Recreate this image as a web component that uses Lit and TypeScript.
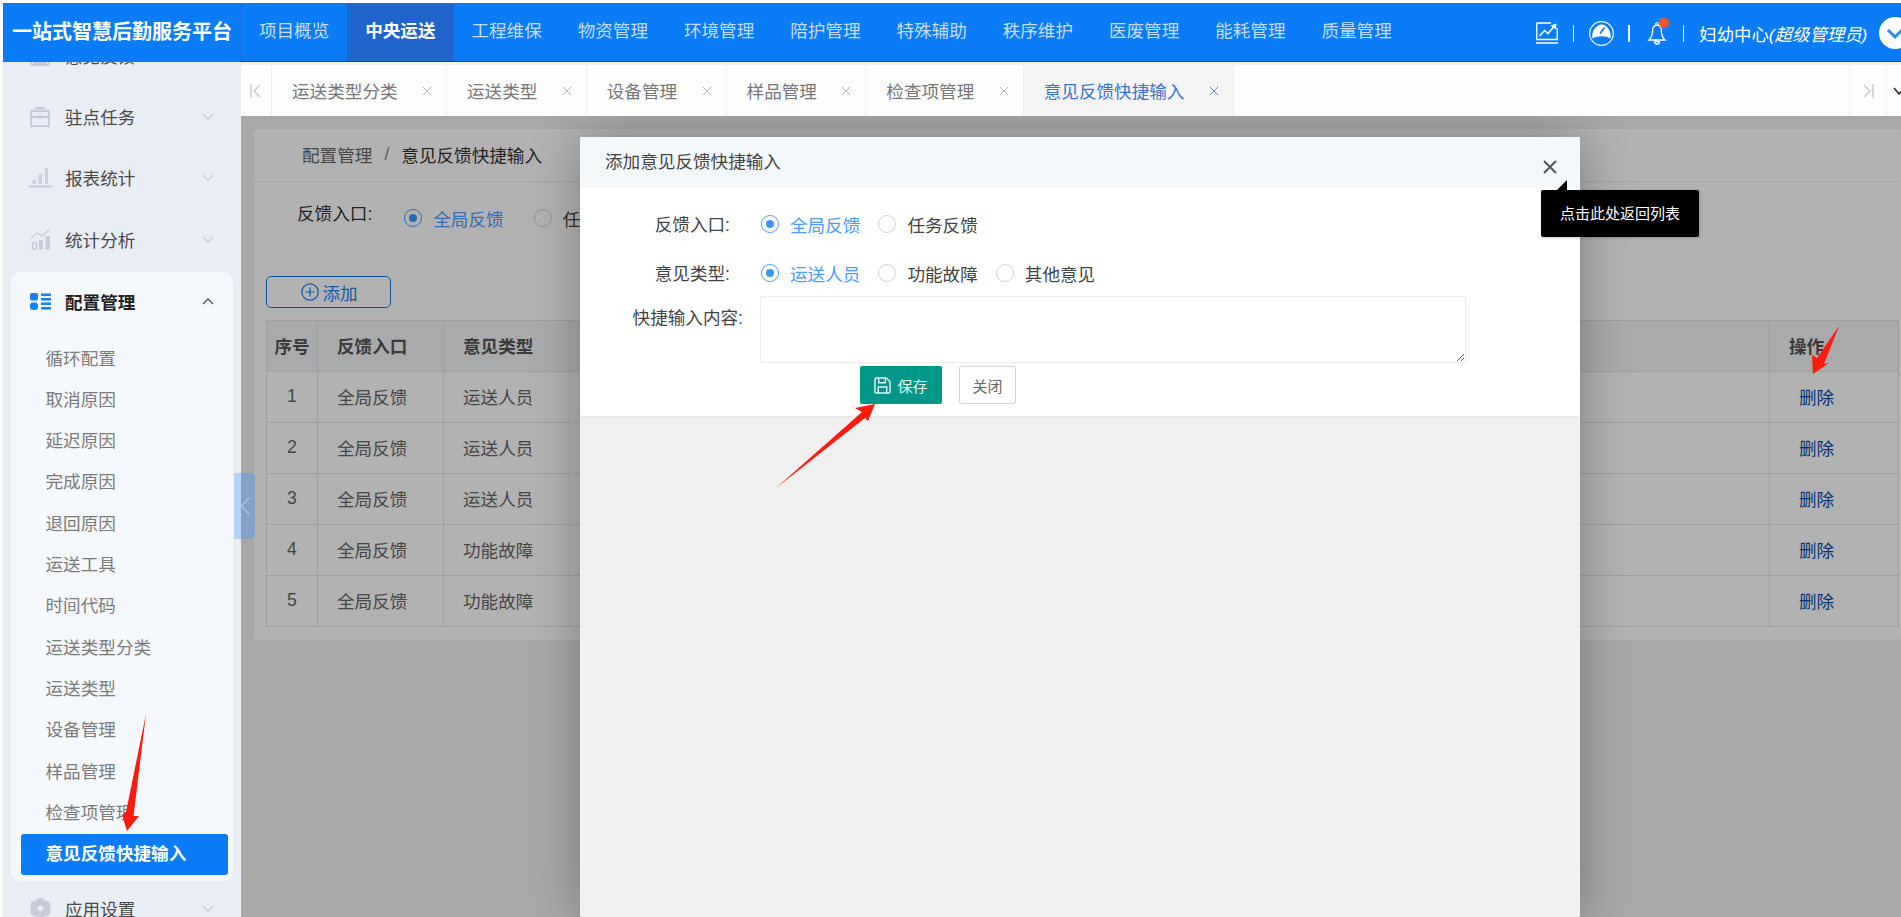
import { LitElement, html, css, svg } from "lit";
import { customElement } from "lit/decorators.js";

const NAV = ["项目概览", "中央运送", "工程维保", "物资管理", "环境管理", "陪护管理", "特殊辅助", "秩序维护", "医废管理", "能耗管理", "质量管理"];
const TABS = ["运送类型分类", "运送类型", "设备管理", "样品管理", "检查项管理", "意见反馈快捷输入"];
const SUB = ["循环配置", "取消原因", "延迟原因", "完成原因", "退回原因", "运送工具", "时间代码", "运送类型分类", "运送类型", "设备管理", "样品管理", "检查项管理", "意见反馈快捷输入"];
const ROWS = [
  ["1", "全局反馈", "运送人员"],
  ["2", "全局反馈", "运送人员"],
  ["3", "全局反馈", "运送人员"],
  ["4", "全局反馈", "功能故障"],
  ["5", "全局反馈", "功能故障"],
];

const chevron = (up = false) => html`<svg class="chev" viewBox="0 0 12 7" width="12" height="7">
  <path d=${up ? "M1 6l5-5 5 5" : "M1 1l5 5 5-5"} fill="none" stroke="currentColor" stroke-width="1.3" />
</svg>`;

const ICONS = {
  report: svg`<rect x="1" y="14" width="18" height="6" rx="1" fill="none" stroke="currentColor" stroke-width="2" /><rect x="3" y="16" width="14" height="4" fill="currentColor" />`,
  task: svg`<path d="M6.5 5V2h7V5M1 5h18v15H1zM1 11h18" fill="none" stroke="currentColor" stroke-width="1.8" /><rect x="8" y="9.5" width="4" height="3" fill="currentColor" />`,
  bars: svg`<path d="M0 19.5h23" stroke="currentColor" stroke-width="2.200" /><path d="M3.500 17v-4h3.500v4zM9.500 17V7h3.500v10zM16 17V1h3v16z" fill="currentColor" opacity=".85" />`,
  stats: svg`<path d="M1 9l6-5 5 3 7-6" fill="none" stroke="currentColor" stroke-width="1.300" /><path d="M2.500 14h4v6h-4z" fill="none" stroke="currentColor" stroke-width="1.300" /><path d="M9 11h4v9.500H9zM15.500 7h4.500v13.500h-4.500z" fill="currentColor" />`,
  config: svg`<rect x="0" y="0" width="8" height="7.500" rx="2" fill="#1280f7" /><rect x="0" y="9.500" width="8" height="7.500" rx="3" fill="#1280f7" /><path d="M11 .5h10v2.500H11zM11 5h10v2.500H11zM11 9.500h10v2.500H11zM11 14h10v2.500H11z" fill="#1280f7" />`,
  gear: svg`<g fill="currentColor"><circle cx="10.500" cy="4.500" r="4.500" /><circle cx="16" cy="7.500" r="4.500" /><circle cx="16" cy="13.500" r="4.500" /><circle cx="10.500" cy="16.500" r="4.500" /><circle cx="5" cy="13.500" r="4.500" /><circle cx="5" cy="7.500" r="4.500" /><circle cx="10.500" cy="10.500" r="6" /></g><circle cx="10.500" cy="10.500" r="2.800" fill="#e9edf5" />`,
};

const sideIcon = (name: keyof typeof ICONS, w = 21, h = 21) =>
  html`<svg class="side-icon" viewBox="0 0 ${w} ${h}" width=${w} height=${h}>${ICONS[name]}</svg>`;

const radio = (label: string, on = false) => html`
  <span class="radio ${on ? "on" : ""}"><i></i>${label}</span>
`;

@customElement("app-root")
export class AppRoot extends LitElement {
  static styles = css`
    :host {
      display: block;
      position: relative;
      width: 1901px;
      height: 917px;
      box-sizing: border-box;
      padding: 3px 0 0 3px;
      overflow: hidden;
      background: #fff;
      font-family: "Liberation Sans", "Noto Sans CJK SC", sans-serif;
      font-size: 17.6px;
      color: #444;
    }
    .topbar {
      display: flex;
      height: 59px;
      background: #0a7cf8;
      position: relative;
      z-index: 2;
    }
    .logo {
      width: 238px;
      flex-shrink: 0;
      text-align: center;
      line-height: 58px;
      font-size: 20px;
      font-weight: 700;
      color: #fff;
      white-space: nowrap;
    }
    .bar {
      flex: 1;
      min-width: 0;
      display: flex;
      align-items: center;
      height: 58px;
      border-bottom: 1px solid #39424e;
      border-left: 1px solid #1a6fd6;
      margin-left: -1px;
      white-space: nowrap;
    }
    .nav-item {
      width: 106.250px;
      flex-shrink: 0;
      height: 57px;
      line-height: 55px;
      text-align: center;
      color: #c4dcfb;
    }
    .nav-item.active {
      background: #2165cc;
      color: #fff;
      font-weight: 700;
    }
    .tools {
      display: flex;
      align-items: center;
      margin-left: 126px;
      color: #fff;
      flex-shrink: 0;
      padding-top: 2px;
    }
    .tools svg {
      display: block;
      flex-shrink: 0;
    }
    .sep {
      width: 1.500px;
      height: 17px;
      background: #e8f2ff;
      flex-shrink: 0;
    }
    .user {
      margin-left: 15px;
      font-size: 17.4px;
    }
    .user em {
      font-style: italic;
    }
    .avatar {
      width: 32px;
      height: 32px;
      margin-left: 12px;
      border-radius: 50%;
      background: #fff;
      flex-shrink: 0;
      color: #2a8bf4;
    }
    .main {
      display: flex;
      height: 855px;
    }
    .side {
      width: 238px;
      flex-shrink: 0;
      overflow: hidden;
      background: #e9edf5;
    }
    .side-list {
      margin-top: -36px;
    }
    .side-item {
      display: flex;
      align-items: center;
      height: 61.400px;
      padding: 0 27px 3px 26px;
      color: #4a4a4a;
      box-sizing: border-box;
    }
    .side-item.short {
      height: 54px;
      padding-bottom: 0;
    }
    .side-icon {
      flex-shrink: 0;
      color: #c7ccd8;
      width: 23px;
      margin-right: 13px;
    }
    .side-item .chev {
      margin-left: auto;
      color: #c9cdd6;
    }
    .group {
      margin-left: 8px;
      width: 222px;
      padding: 0 5px 6px 10px;
      box-sizing: border-box;
      background: #f5f8fc;
      border-radius: 9px;
    }
    .group .side-item {
      margin-left: -10px;
      margin-right: -5px;
      padding: 0 19px 8px 18px;
      height: 67px;
      color: #222;
      font-weight: 700;
    }
    .group .side-item .chev {
      color: #555;
    }
    .sub {
      height: 41.300px;
      line-height: 41.300px;
      padding-left: 24.500px;
      color: #7b7b7b;
      border-radius: 3px;
    }
    .sub.active {
      background: #0a7cf8;
      color: #fff;
      font-weight: 700;
      height: 41px;
    }
    .collapse {
      position: absolute;
      left: 234px;
      top: 473px;
      width: 21px;
      height: 66px;
      border-radius: 0 5px 5px 0;
      background: linear-gradient(90deg, #b4d2f6 7px, #84a2c8 7px);
      color: #a9c6ea;
      display: flex;
      align-items: center;
      justify-content: center;
      z-index: 3;
    }
    .right {
      flex: 1;
      min-width: 0;
      display: flex;
      flex-direction: column;
    }
    .tabs {
      display: flex;
      height: 54px;
      box-sizing: border-box;
      border-top: 3px solid #f2f2f2;
      background: #fdfdfd;
      color: #777;
      flex-shrink: 0;
      white-space: nowrap;
    }
    .tab-ctl {
      width: 31px;
      flex-shrink: 0;
      display: flex;
      align-items: center;
      justify-content: center;
      border-right: 1px solid #f0f0f0;
      box-sizing: border-box;
      color: #ccc;
    }
    .tab-ctl.end {
      width: 37px;
      margin-left: auto;
      border-right: 0;
      border-left: 1px solid #f0f0f0;
    }
    .tab-ctl.menu {
      width: 15px;
      border-right: 0;
      border-left: 1px solid #f0f0f0;
      justify-content: flex-start;
      padding-left: 6px;
      color: #222;
      overflow: hidden;
    }
    .tab-ctl.menu svg {
      flex-shrink: 0;
    }
    .tab {
      display: flex;
      align-items: center;
      padding: 0 13px 0 20px;
      border-right: 1px solid #f0f0f0;
      box-sizing: border-box;
      flex-shrink: 0;
    }
    .tab svg {
      margin-left: 23.400px;
      color: #b5b5b5;
    }
    .tab.active {
      background: #f5f5f5;
      color: #3a72cc;
    }
    .tab.active svg {
      color: #5f86d0;
    }
    .page {
      flex: 1;
      position: relative;
      background: #f1f1f1;
      padding: 13px 0 0 13px;
      min-height: 0;
      overflow: hidden;
    }
    .card {
      height: 511px;
      box-sizing: border-box;
      background: #fff;
      border-radius: 4px;
      padding-right: 2px;
    }
    .crumb {
      height: 53px;
      box-sizing: border-box;
      border-bottom: 1px solid #eee;
      padding-left: 48px;
      display: flex;
      align-items: center;
      color: #666;
      padding-bottom: 2px;
    }
    .crumb span {
      margin: 0 12px;
      color: #888;
    }
    .crumb b {
      font-weight: 400;
      color: #333;
    }
    .filter {
      display: flex;
      height: 94px;
      padding-left: 43px;
      box-sizing: border-box;
    }
    .filter label {
      margin-top: 19px;
      line-height: 26px;
      height: 26px;
      margin-right: 32px;
      color: #333;
    }
    .filter .radios {
      margin-top: 23px;
      height: 26px;
      display: flex;
    }
    .filter .radio {
      margin-right: 30px;
    }
    .radio {
      display: inline-flex;
      align-items: center;
      height: 26px;
      margin-right: 18px;
      color: #444;
      white-space: nowrap;
    }
    .radio i {
      width: 18px;
      height: 18px;
      box-sizing: border-box;
      border: 1px solid #d4d4d4;
      border-radius: 50%;
      margin-right: 11px;
      flex-shrink: 0;
      position: relative;
    }
    .radio.on {
      color: #4a9dff;
    }
    .radio.on i {
      border-color: #4a9dff;
    }
    .radio.on i::after {
      content: "";
      position: absolute;
      inset: 4px;
      border-radius: 50%;
      background: #3d96ff;
    }
    .add {
      margin-left: 12px;
      width: 125px;
      height: 32px;
      box-sizing: border-box;
      border: 1px solid #0a7cf8;
      border-radius: 5px;
      display: flex;
      align-items: center;
      justify-content: center;
      gap: 3px;
      padding-left: 2px;
      color: #1e82f0;
    }
    table {
      margin: 12px 0 0 12px;
      width: 1633px;
      table-layout: fixed;
      border-collapse: collapse;
    }
    th,
    td {
      height: 51px;
      padding: 0 0 1px 19px;
      box-sizing: border-box;
      border: 1px solid #e6e6e6;
      text-align: left;
      color: #666;
      font-weight: 400;
    }
    tr {
      height: 51px;
    }
    th {
      background: #f2f4f7;
      color: #555;
      font-weight: 700;
    }
    th.num,
    td.num {
      padding: 0 0 1px;
      text-align: center;
    }
    td.del {
      padding-left: 29px;
      color: #0a4fa8;
    }
    .shade {
      position: absolute;
      inset: 0;
      background: rgba(0, 0, 0, 0.3);
    }
    .modal {
      position: absolute;
      left: 339px;
      top: 21px;
      width: 1000px;
      height: 780px;
      background: #f0f0f0;
      border-radius: 2px;
      box-shadow: 1px 1px 50px rgba(0, 0, 0, 0.3);
    }
    .modal-head {
      height: 51px;
      line-height: 50px;
      padding-left: 25px;
      background: #f5f8fb;
      border-radius: 2px 2px 0 0;
      color: #444;
    }
    .x {
      position: absolute;
      left: 963px;
      top: 23px;
      color: #555;
    }
    .tip {
      position: absolute;
      left: 961px;
      top: 53px;
      width: 158px;
      height: 47px;
      line-height: 47px;
      text-align: center;
      font-size: 15px;
      background: #000;
      color: #fff;
      border-radius: 2px;
      box-shadow: 1px 1px 3px rgba(0, 0, 0, 0.2);
      z-index: 2;
    }
    .tip::before {
      content: "";
      position: absolute;
      left: 16px;
      top: -10px;
      width: 10px;
      height: 10px;
      background: #000;
      clip-path: polygon(100% 0, 100% 100%, 0 100%);
    }
    .modal-body {
      background: #fff;
      padding: 14px 0 12px;
      height: 228px;
      box-sizing: border-box;
      border-radius: 0 0 2px 2px;
      box-shadow: 0 1px 2px rgba(0, 0, 0, 0.05);
    }
    .form-row {
      display: grid;
      grid-template-columns: 180px 1fr;
      height: 44px;
      align-items: center;
    }
    .form-row.first {
      margin-bottom: 5px;
    }
    .form-row label {
      text-align: right;
      padding-right: 30px;
      margin-top: -2px;
      color: #444;
    }
    .form-row.text {
      height: 67px;
      margin-top: 1px;
      align-items: start;
    }
    .form-row.text label {
      padding-right: 17px;
      margin-top: 0;
      line-height: 44px;
    }
    .radios {
      display: flex;
    }
    .form-row .radios {
      margin-left: 1px;
    }
    textarea {
      display: block;
      width: 706px;
      height: 67px;
      box-sizing: border-box;
      border: 1px solid #ececec;
      border-radius: 2px;
      outline: none;
      background: #fff;
      margin: 0;
    }
    .actions {
      display: flex;
      gap: 17px;
      margin: 3px 0 0 280px;
    }
    .btn {
      height: 38px;
      box-sizing: border-box;
      border-radius: 2px;
      display: flex;
      align-items: center;
      justify-content: center;
      font-size: 15px;
    }
    .btn.save {
      width: 82px;
      background: #009688;
      color: #e6f5f3;
      gap: 6px;
    }
    .btn.close {
      width: 57px;
      border: 1px solid #d4d4d4;
      color: #666;
      background: #fff;
    }
    .arrows {
      position: absolute;
      left: 0;
      top: 0;
      pointer-events: none;
      z-index: 5;
    }
  `;

  private renderTop() {
    return html`
      <header class="topbar">
        <div class="logo">一站式智慧后勤服务平台</div>
        <div class="bar">
          ${NAV.map((n, i) => html`<div class="nav-item ${i === 1 ? "active" : ""}">${n}</div>`)}
          <div class="tools">
            <svg viewBox="0 0 22 22" width="22" height="22" fill="none" stroke="currentColor">
              <path d="M15 1H1.500a.7.7 0 0 0-.7.7V17.500h20.400V6" stroke-width="1.300" />
              <path d="M3.500 14l5-5.500 3.500 3 6-7" stroke-width="1.600" />
              <path d="M14.500 3.500L20.500 1.500 20 7.500z" fill="currentColor" stroke="none" />
              <path d="M0 21h22" stroke-width="1.500" />
            </svg>
            <span class="sep" style="margin-left:15px"></span>
            <svg style="margin-left:15px" viewBox="0 0 25 25" width="25" height="25">
              <circle cx="12.500" cy="12.500" r="11.800" fill="none" stroke="currentColor" stroke-width="1.200" />
              <path d="M3.500 17.500C2 10 7.500 3.500 12.500 3.500S23 10 21.500 17.500C17 14.500 8 14.500 3.500 17.500z" fill="currentColor" />
              <path d="M11 12.500L15.500 6.500" stroke="#0a7cf8" stroke-width="1.700" />
            </svg>
            <span class="sep" style="margin-left:14px"></span>
            <svg style="margin-left:18px;overflow:visible" viewBox="0 0 18 23" width="18" height="23">
              <path d="M9 3.200C5.500 3.200 4.500 6.500 4.500 10c0 3.800-1.500 6-3.500 8h16c-2-2-3.500-4.200-3.500-8 0-3.500-1-6.800-4.500-6.800z" fill="none" stroke="currentColor" stroke-width="1.300" />
              <circle cx="9" cy="2" r="1.400" fill="none" stroke="currentColor" />
              <path d="M6.500 19.500a2.500 2.500 0 0 0 5 0z" fill="none" stroke="currentColor" stroke-width="1.300" />
              <circle cx="16" cy="1" r="5" fill="#ff5522" />
            </svg>
            <span class="sep" style="margin-left:17px"></span>
            <span class="user">妇幼中心<em>(超级管理员)</em></span>
            <svg class="avatar" viewBox="0 0 32 32"><path d="M9 13l7 7 7-7" fill="none" stroke="currentColor" stroke-width="3" /></svg>
          </div>
        </div>
      </header>
    `;
  }

  private renderSide() {
    return html`
      <aside class="side">
        <div class="side-list">
          <div class="side-item">${sideIcon("report")}意见反馈${chevron()}</div>
          <div class="side-item">${sideIcon("task")}驻点任务${chevron()}</div>
          <div class="side-item">${sideIcon("bars", 23)}报表统计${chevron()}</div>
          <div class="side-item">${sideIcon("stats")}统计分析${chevron()}</div>
          <div class="group">
            <div class="side-item">${sideIcon("config", 21, 17)}配置管理${chevron(true)}</div>
            ${SUB.map((s, i) => html`<div class="sub ${i === SUB.length - 1 ? "active" : ""}">${s}</div>`)}
          </div>
          <div class="side-item short">${sideIcon("gear")}<span style="font-weight:400">应用设置</span>${chevron()}</div>
        </div>
      </aside>
    `;
  }

  private renderTabs() {
    const x = html`<svg viewBox="0 0 12 12" width="12" height="12"><path d="M2 2l8 8M10 2l-8 8" stroke="currentColor" stroke-width="1" /></svg>`;
    return html`
      <nav class="tabs">
        <div class="tab-ctl">
          <svg viewBox="0 0 12 14" width="12" height="14" fill="none" stroke="currentColor" stroke-width="1.500">
            <path d="M1 0v14M10 1L4 7l6 6" />
          </svg>
        </div>
        ${TABS.map((t, i) => html`<div class="tab ${i === TABS.length - 1 ? "active" : ""}">${t}${x}</div>`)}
        <div class="tab-ctl end">
          <svg viewBox="0 0 12 14" width="12" height="14" fill="none" stroke="currentColor" stroke-width="1.500">
            <path d="M11 0v14M2 1l6 6-6 6" />
          </svg>
        </div>
        <div class="tab-ctl menu">
          <svg viewBox="0 0 12 8" width="12" height="8"><path d="M1 1l5 6 5-6" fill="none" stroke="currentColor" stroke-width="1.500" /></svg>
        </div>
      </nav>
    `;
  }

  private renderCard() {
    return html`
      <section class="card">
        <div class="crumb">配置管理<span>/</span><b>意见反馈快捷输入</b></div>
        <div class="filter">
          <label>反馈入口:</label>
          <div class="radios">${radio("全局反馈", true)}${radio("任务反馈")}</div>
        </div>
        <div class="add">
          <svg viewBox="0 0 18 18" width="18" height="18" fill="none" stroke="currentColor" stroke-width="1.200">
            <circle cx="9" cy="9" r="8.200" /><path d="M9 4.500v9M4.500 9h9" />
          </svg>
          添加
        </div>
        <table>
          <colgroup>
            <col style="width:51px" /><col style="width:126px" /><col style="width:126px" /><col /><col style="width:129px" />
          </colgroup>
          <thead>
            <tr><th class="num">序号</th><th>反馈入口</th><th>意见类型</th><th>快捷输入内容</th><th>操作</th></tr>
          </thead>
          <tbody>
            ${ROWS.map(
              (r) => html`<tr><td class="num">${r[0]}</td><td>${r[1]}</td><td>${r[2]}</td><td></td><td class="del">删除</td></tr>`,
            )}
          </tbody>
        </table>
      </section>
    `;
  }

  private renderModal() {
    return html`
      <div class="shade"></div>
      <div class="modal">
        <div class="modal-head">添加意见反馈快捷输入</div>
        <svg class="x" viewBox="0 0 14 14" width="14" height="14">
          <path d="M1 1l12 12M13 1L1 13" stroke="currentColor" stroke-width="2" />
        </svg>
        <div class="tip">点击此处返回列表</div>
        <div class="modal-body">
          <div class="form-row first">
            <label>反馈入口:</label>
            <div class="radios">${radio("全局反馈", true)}${radio("任务反馈")}</div>
          </div>
          <div class="form-row">
            <label>意见类型:</label>
            <div class="radios">${radio("运送人员", true)}${radio("功能故障")}${radio("其他意见")}</div>
          </div>
          <div class="form-row text">
            <label>快捷输入内容:</label>
            <textarea></textarea>
          </div>
          <div class="actions">
            <div class="btn save">
              <svg viewBox="0 0 18 18" width="17" height="17" fill="none" stroke="currentColor" stroke-width="1.500">
                <path d="M1 2.500A1.500 1.500 0 0 1 2.500 1H13l4 4v10.500a1.500 1.500 0 0 1-1.500 1.500h-13A1.500 1.500 0 0 1 1 15.500z" />
                <path d="M5 1v5h7V1M4.500 17v-6.500h9V17" />
              </svg>
              保存
            </div>
            <div class="btn close">关闭</div>
          </div>
        </div>
      </div>
    `;
  }

  protected render() {
    return html`
      ${this.renderTop()}
      <div class="main">
        ${this.renderSide()}
        <div class="right">
          ${this.renderTabs()}
          <div class="page">${this.renderCard()}${this.renderModal()}</div>
        </div>
      </div>
      <div class="collapse">
        <svg viewBox="0 0 10 18" width="10" height="18"><path d="M9 1L1.500 9 9 17" fill="none" stroke="currentColor" stroke-width="1.500" /></svg>
      </div>
      <svg class="arrows" viewBox="0 0 1901 917" width="1901" height="917" fill="#ff1a0e">
        <polygon points="146,714 133.500,816 139,816 127,831 122,815 126,812" />
        <polygon points="776,488 862,412 855,408 875,404 868,421 865,418" />
        <polygon points="1839,326 1817,358 1812,355 1813,374 1829,363 1824,364" />
      </svg>
    `;
  }
}
